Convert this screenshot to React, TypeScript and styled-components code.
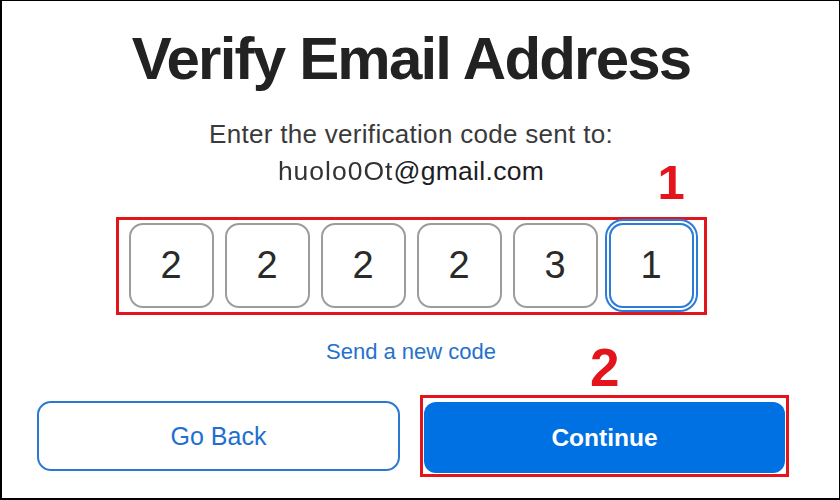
import React from "react";
import styled, { createGlobalStyle } from "styled-components";

const Global = createGlobalStyle`
  html, body { margin: 0; padding: 0; background: #fff; }
  body { font-family: "Liberation Sans", Arial, sans-serif; }
  * { box-sizing: border-box; }
`;

const Frame = styled.div`
  width: 840px;
  height: 500px;
  border-style: solid;
  border-color: #000;
  border-width: 1px 1px 2px 2px;
  background: #fff;
  overflow: hidden;
  padding-left: 35px;
`;

const Column = styled.main`
  width: 748px;
  display: flex;
  flex-direction: column;
  align-items: center;
`;

const Title = styled.h1`
  margin: 28px 0 0;
  font-size: 60px;
  line-height: 60px;
  font-weight: 700;
  letter-spacing: -1.8px;
  color: #222;
`;

const Prompt = styled.p`
  margin: 27px 0 0;
  font-size: 26px;
  line-height: 37px;
  color: #3a3a3a;
  letter-spacing: 0.3px;
  text-align: center;
`;

const Email = styled.span`
  display: block;
  font-size: 26.5px;
  color: #1d1d1f;
`;

const Masked = styled.span`
  filter: blur(0.6px);
  letter-spacing: 1px;
  color: #333;
`;

const Mark = styled.div`
  position: relative;
  border: 3px solid #e3141c;
`;

const CodeMark = styled(Mark)`
  margin-top: 27px;
  padding: 3px 10px 4px;
  display: flex;
  gap: 11px;
`;

const Digit = styled.div<{ $active?: boolean }>`
  width: 85px;
  height: 85px;
  border-radius: 14px;
  border: 2px solid ${(p) => (p.$active ? "#2b7bd8" : "#9c9c9c")};
  box-shadow: ${(p) => (p.$active ? "0 0 0 2px #fff, 0 0 0 4px #2b7bd8" : "none")};
  display: flex;
  align-items: center;
  justify-content: center;
  font-size: 38px;
  color: #2a2a2a;
`;

const Callout = styled.span<{ $size: number }>`
  position: absolute;
  font-size: ${(p) => p.$size}px;
  line-height: 1;
  font-weight: 700;
  color: #e3141c;
`;

const Resend = styled.a`
  margin-top: 24px;
  font-size: 22px;
  line-height: 26px;
  color: #2472cc;
  text-decoration: none;
`;

const Actions = styled.div`
  align-self: flex-start;
  margin-top: 30px;
  display: flex;
  align-items: center;
  gap: 20px;
`;

const GoBack = styled.button`
  width: 363px;
  height: 70px;
  flex-shrink: 0;
  border: 2px solid #2a78d4;
  border-radius: 14px;
  background: #fff;
  color: #1e6fcf;
  font-family: inherit;
  font-size: 25px;
`;

const ContinueMark = styled(Mark)`
  width: 369px;
  flex-shrink: 0;
  padding: 4px 1px 1px 1px;
`;

const Continue = styled.button`
  display: block;
  width: 100%;
  height: 71px;
  border: none;
  border-radius: 12px;
  background: #0071e3;
  color: #fff;
  font-family: inherit;
  font-size: 24.5px;
  font-weight: 700;
`;

const digits = ["2", "2", "2", "2", "3", "1"];

export default function App() {
  return (
    <>
      <Global />
      <Frame>
        <Column>
          <Title>Verify Email Address</Title>
          <Prompt>
            Enter the verification code sent to:
            <Email>
              <Masked>huolo0Ot</Masked>@gmail.com
            </Email>
          </Prompt>
          <CodeMark>
            <Callout $size={49} style={{ top: -62, left: 539 }}>1</Callout>
            {digits.map((d, i) => (
              <Digit key={i} $active={i === digits.length - 1}>
                {d}
              </Digit>
            ))}
          </CodeMark>
          <Resend href="#">Send a new code</Resend>
          <Actions>
            <GoBack>Go Back</GoBack>
            <ContinueMark>
              <Callout $size={53} style={{ top: -57, left: 167 }}>2</Callout>
              <Continue>Continue</Continue>
            </ContinueMark>
          </Actions>
        </Column>
      </Frame>
    </>
  );
}
